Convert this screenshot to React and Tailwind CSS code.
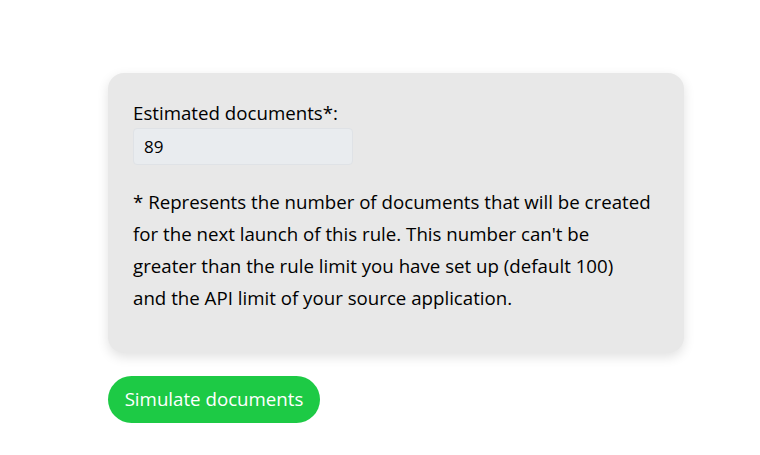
import { useState } from "react";

const App = () => {
  const [estimated, setEstimated] = useState("89");

  return (
    <div className="min-h-screen bg-white font-['Open_Sans',sans-serif] text-[18.7px] text-black">
      <div className="pt-[73px] pl-[108px]">
        <div className="w-[576px] rounded-2xl bg-[#e8e8e8] px-[25px] pt-[26px] pb-[39px] shadow-[0_4px_12px_rgba(0,0,0,0.12)]">
          <label className="block leading-[27px]">Estimated documents*:</label>
          <input
            className="mt-[2px] h-[37px] w-[220px] rounded border border-[#dfe2e6] bg-[#e9ecef] px-[10px] text-[17px] outline-none"
            value={estimated}
            onChange={(e) => setEstimated(e.target.value)}
          />
          <p className="mt-[21px] leading-[32px]">
            * Represents the number of documents that will be created
            <br />
            for the next launch of this rule. This number can't be
            <br />
            greater than the rule limit you have set up (default 100)
            <br />
            and the API limit of your source application.
          </p>
        </div>
        <button className="mt-[23px] h-[47px] w-[212px] rounded-full bg-[#1dca45] text-white">
          Simulate documents
        </button>
      </div>
    </div>
  );
};

export default App;
